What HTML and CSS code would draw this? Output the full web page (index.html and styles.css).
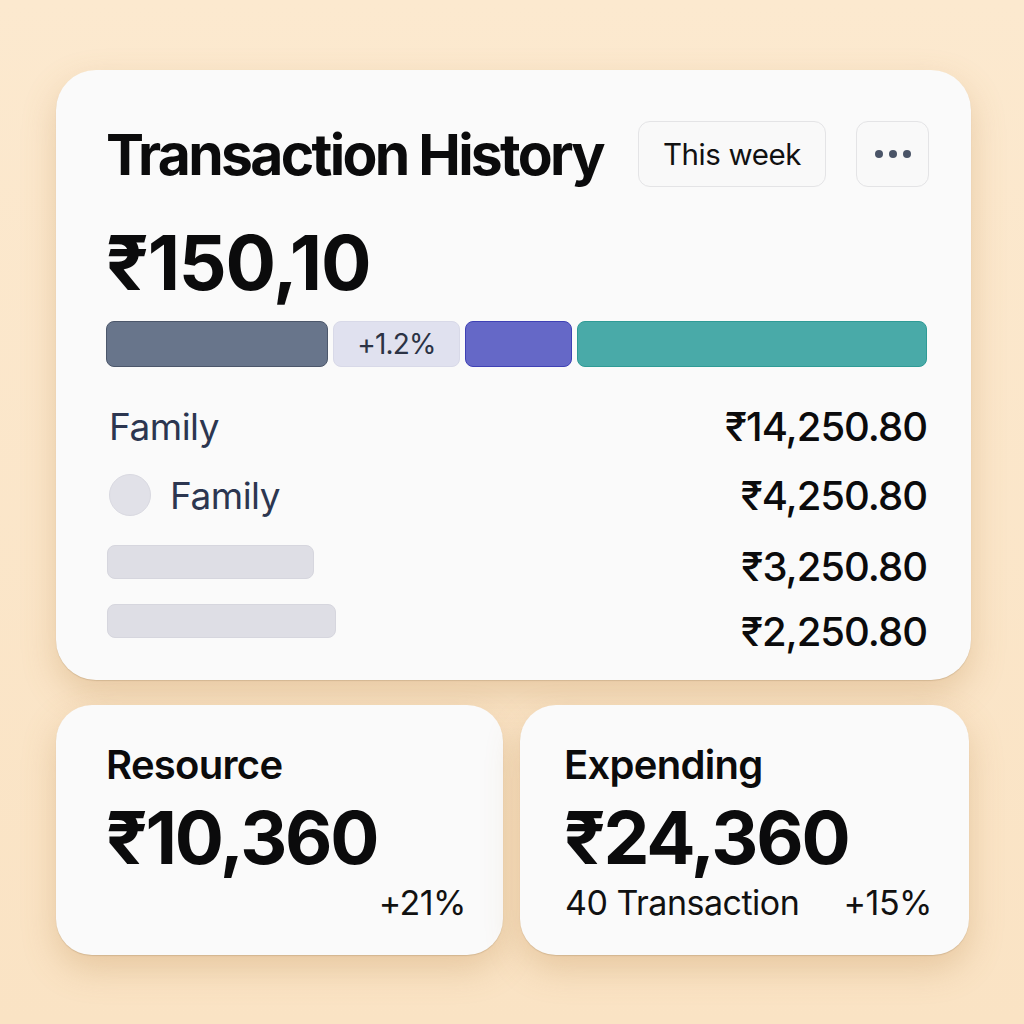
FILE: index.html
```html
<!DOCTYPE html>
<html>
<head>
<meta charset="utf-8">
<link rel="stylesheet" href="styles.css">
</head>
<body>
<div class="page">
  <section class="card main">
    <div class="header">
      <h1 class="title">Transaction History</h1>
      <div class="actions">
        <button class="btn week">This week</button>
        <button class="btn more" aria-label="More">
          <svg width="38" height="12" viewBox="0 0 38 12"><circle cx="5" cy="6" r="4" fill="#4b5568"/><circle cx="19" cy="6" r="4" fill="#4b5568"/><circle cx="33" cy="6" r="4" fill="#4b5568"/></svg>
        </button>
      </div>
    </div>
    <div class="total">₹150,10</div>
    <div class="bar">
      <div class="seg s1"></div>
      <div class="seg s2">+1.2%</div>
      <div class="seg s3"></div>
      <div class="seg s4"></div>
    </div>
    <div class="rows">
      <div class="row r1"><span class="label">Family</span><span class="amt">₹14,250.80</span></div>
      <div class="row r2"><span class="label"><span class="dot"></span>Family</span><span class="amt">₹4,250.80</span></div>
      <div class="row r3"><span class="pill p1"></span><span class="amt">₹3,250.80</span></div>
      <div class="row r4"><span class="pill p2"></span><span class="amt">₹2,250.80</span></div>
    </div>
  </section>
  <div class="stats">
    <section class="card stat left">
      <h2 class="stat-title">Resource</h2>
      <div class="stat-value">₹10,360</div>
      <div class="stat-foot"><span></span><span class="pct">+21%</span></div>
    </section>
    <section class="card stat right">
      <h2 class="stat-title">Expending</h2>
      <div class="stat-value">₹24,360</div>
      <div class="stat-foot"><span class="count">40 Transaction</span><span class="pct">+15%</span></div>
    </section>
  </div>
</div>
</body>
</html>
```

FILE: styles.css
```css
* { box-sizing: border-box; }
html, body { margin: 0; padding: 0; }
body {
  width: 1024px;
  height: 1024px;
  background: linear-gradient(180deg, #fce9cf 0%, #fae3c4 100%);
  font-family: Inter, "Noto Sans", "DejaVu Sans", sans-serif;
  color: #0b0b0c;
  overflow: hidden;
}
.page {
  padding: 70px 0 0 56px;
}
.card {
  background: #fafafa;
  box-shadow: 0 1px 1px rgba(120, 90, 50, 0.2), 0 14px 34px rgba(185, 135, 75, 0.3);
}
.main {
  width: 915px;
  height: 610px;
  border-radius: 40px;
  padding: 51px 44px 0 50px;
}
.header {
  display: flex;
  align-items: center;
  justify-content: space-between;
  height: 66px;
  margin-right: -2px;
}
.title {
  margin: 0;
  font-size: 57px;
  font-weight: 700;
  letter-spacing: -2.7px;
  line-height: 1;
}
.actions {
  display: flex;
  gap: 30px;
}
.btn {
  height: 66px;
  border: 1.5px solid #e4e4e6;
  background: #f9f9f9;
  border-radius: 12px;
  font-family: inherit;
  color: #111;
  display: flex;
  align-items: center;
  justify-content: center;
  padding: 0;
}
.week {
  width: 188px;
  font-size: 29.5px;
  font-weight: 400;
  letter-spacing: -0.4px;
}
.more {
  width: 73px;
}
.total {
  margin-top: 36px;
  font-size: 75px;
  font-weight: 700;
  letter-spacing: -1.2px;
  line-height: 80px;
}
.bar {
  margin-top: 18px;
  display: flex;
  gap: 5px;
  height: 46px;
}
.seg {
  border-radius: 8px;
  border: 1.5px solid transparent;
}
.s1 { width: 222px; background: #68758b; border-color: #4c576b; }
.s2 {
  width: 127px;
  background: #e0e1ef;
  border-color: #d8d9e8;
  display: flex;
  align-items: center;
  justify-content: center;
  font-size: 28px;
  color: #2b3345;
  letter-spacing: -0.8px;
}
.s3 { width: 107px; background: #6568c7; border-color: #3f41b5; }
.s4 { flex: 1; background: #49aaa8; border-color: #2f9b96; }
.rows {
  margin-top: 26px;
  display: flex;
  flex-direction: column;
}
.row {
  display: flex;
  align-items: center;
  justify-content: space-between;
}
.r1 { height: 66px; }
.r2 { height: 72px; }
.r3 { height: 66px; }
.r4 { height: 56px; }
.label {
  display: flex;
  align-items: center;
  font-size: 37px;
  color: #2c3650;
  letter-spacing: -0.5px;
  padding-left: 3px;
}
.dot {
  width: 42px;
  height: 42px;
  border-radius: 50%;
  background: #e1e1e8;
  border: 1px solid #d9d9e1;
  margin-right: 19px;
}
.amt {
  font-size: 40px;
  font-weight: 500;
  letter-spacing: -1px;
  color: #0b0b0c;
}
.pill {
  display: block;
  height: 34px;
  border-radius: 8px;
  background: #dedee5;
  border: 1px solid #d6d6de;
  margin-left: 1px;
}
.p1 { width: 207px; }
.p2 { width: 229px; }
.r3 .amt { margin-top: 4px; }
.r4 .amt { margin-top: 12px; }
.r3 .pill { margin-top: -4px; }
.r4 .pill { margin-top: -8px; }

.stats {
  margin-top: 25px;
  width: 913px;
  display: grid;
  grid-template-columns: 447px 449px;
  gap: 17px;
}
.stat {
  height: 250px;
  border-radius: 36px;
  padding: 35px 37px 0 50px;
}
.stat.right { padding-left: 44px; }
.stat-title {
  margin: 0;
  font-size: 40px;
  font-weight: 600;
  letter-spacing: -0.7px;
  line-height: 50px;
}
.stat-value {
  margin-top: 5px;
  font-size: 73px;
  font-weight: 700;
  letter-spacing: -2.2px;
  line-height: 86px;
}
.stat-foot {
  display: flex;
  justify-content: space-between;
  font-size: 34px;
  line-height: 41px;
  margin-top: 1px;
  letter-spacing: -0.5px;
  color: #111;
}
.count { padding-left: 1px; }
```
